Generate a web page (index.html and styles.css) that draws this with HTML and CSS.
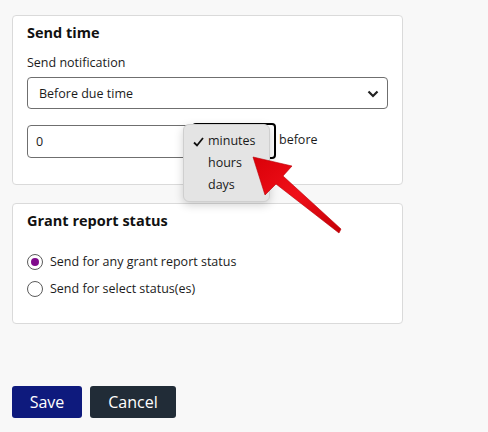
FILE: index.html
```html
<!DOCTYPE html>
<html lang="en">
<head>
<meta charset="utf-8">
<title>Notification settings</title>
<link rel="stylesheet" href="styles.css">
</head>
<body>
<div class="page">
  <section class="card card-time">
    <h2 class="card-title">Send time</h2>
    <div class="label">Send notification</div>
    <div class="select">
      <span>Before due time</span>
      <svg class="chev" width="12" height="8" viewBox="0 0 12 8"><path d="M1.5 1.5 L6 6 L10.5 1.5" fill="none" stroke="#222" stroke-width="2.2"/></svg>
    </div>
    <div class="offset-row">
      <div class="num-input">0</div>
      <div class="unit-select">
        <svg class="chev-small" width="10" height="6" viewBox="0 0 10 6"><path d="M1 1 L5 5 L9 1" fill="none" stroke="#444" stroke-width="1.6"/></svg>
      </div>
      <span class="before">before</span>
      <div class="popup">
        <div class="opt opt-sel">
          <svg class="check" width="11" height="10" viewBox="0 0 11 10"><path d="M1 5.5 L4 8.5 L10 1" fill="none" stroke="#111" stroke-width="1.8"/></svg>
          <span>minutes</span>
        </div>
        <div class="opt"><span>hours</span></div>
        <div class="opt"><span>days</span></div>
      </div>
    </div>
  </section>

  <section class="card card-status">
    <h2 class="card-title">Grant report status</h2>
    <label class="radio-row"><span class="radio checked"></span><span>Send for any grant report status</span></label>
    <label class="radio-row"><span class="radio"></span><span>Send for select status(es)</span></label>
  </section>

  <div class="actions">
    <button class="btn btn-save">Save</button>
    <button class="btn btn-cancel">Cancel</button>
  </div>

  <svg class="arrow" width="488" height="432" viewBox="0 0 488 432">
    <defs>
      <linearGradient id="ag" x1="0" y1="0" x2="1" y2="1">
        <stop offset="0" stop-color="#d90008"/>
        <stop offset="0.5" stop-color="#f0101a"/>
        <stop offset="1" stop-color="#c40006"/>
      </linearGradient>
    </defs>
    <path d="M253 157 L292 166 L283 176 L341 229 L339 233 L276 184 L265 195 Z" fill="url(#ag)" stroke="#b80006" stroke-width="0.6" stroke-linejoin="round"/>
  </svg>
</div>
</body>
</html>
```

FILE: styles.css
```css
* { box-sizing: border-box; }
html, body { margin: 0; padding: 0; }
body {
  background: #f8f8f8;
  font-family: "Open Sans", "Noto Sans", sans-serif;
  color: #1b1b1b;
  width: 488px;
  height: 432px;
  overflow: hidden;
}
.page {
  position: relative;
  padding: 15px 0 0 12px;
  height: 432px;
}
.card {
  width: 391px;
  background: #fff;
  border: 1px solid #dadada;
  border-radius: 4px;
  padding: 7px 14px 0 14px;
}
.card-time { height: 170px; }
.card-status { height: 121px; margin-top: 18px; }
.card-title {
  margin: 0;
  font-size: 14.5px;
  line-height: 20px;
  font-weight: 700;
  color: #111;
}
.label {
  margin-top: 11px;
  font-size: 12.5px;
  line-height: 18px;
}
.select {
  margin-top: 5px;
  width: 361px;
  height: 32px;
  border: 1px solid #6f6f6f;
  border-radius: 4px;
  display: flex;
  align-items: center;
  justify-content: space-between;
  padding: 1px 8px 0 11px;
  font-size: 12.5px;
}
.offset-row {
  position: relative;
  margin-top: 14px;
  display: flex;
  align-items: center;
}
.num-input {
  width: 163px;
  height: 33px;
  border: 1px solid #6f6f6f;
  border-radius: 4px;
  display: flex;
  align-items: center;
  padding-left: 8px;
  font-size: 12.5px;
}
.unit-select {
  margin-left: 2px;
  width: 84px;
  height: 36px;
  border: 2px solid #000;
  border-radius: 4px;
  display: flex;
  align-items: center;
  justify-content: flex-end;
  padding-right: 4px;
}
.chev-small { margin-top: 1px; }
.before {
  margin-left: 3px;
  font-size: 12.5px;
  margin-top: -3px;
}
.popup {
  position: absolute;
  left: 156px;
  top: 1px;
  width: 87px;
  height: 78px;
  background: #e4e4e4;
  border: 1px solid #cfcfcf;
  border-radius: 6px;
  box-shadow: 0 3px 10px rgba(0,0,0,0.18);
  padding-top: 5px;
}
.opt {
  position: relative;
  height: 22px;
  line-height: 22px;
  font-size: 12.5px;
  padding-left: 24px;
  color: #1a1a1a;
}
.check {
  position: absolute;
  left: 9px;
  top: 7px;
}
.radio-row {
  display: flex;
  align-items: center;
  gap: 7px;
  font-size: 12.5px;
  line-height: 20px;
  height: 27px;
}
.radio-row:first-of-type { margin-top: 17px; }
.radio {
  width: 16px;
  height: 16px;
  border-radius: 50%;
  border: 1px solid #5b5b5b;
  background: #fff;
  position: relative;
  flex: none;
}
.radio.checked::after {
  content: "";
  position: absolute;
  left: 3px;
  top: 3px;
  width: 8px;
  height: 8px;
  border-radius: 50%;
  background: #800a8c;
}
.actions {
  margin-top: 62px;
  display: flex;
  gap: 8px;
}
.btn {
  height: 32px;
  border: none;
  border-radius: 3px;
  color: #fff;
  font-family: "Open Sans", "Noto Sans", sans-serif;
  font-size: 16px;
  padding: 0;
}
.btn-save { width: 70px; background: #0e1a7d; }
.btn-cancel { width: 86px; background: #212c37; }
.arrow {
  position: absolute;
  left: 0;
  top: 0;
  pointer-events: none;
}
```
